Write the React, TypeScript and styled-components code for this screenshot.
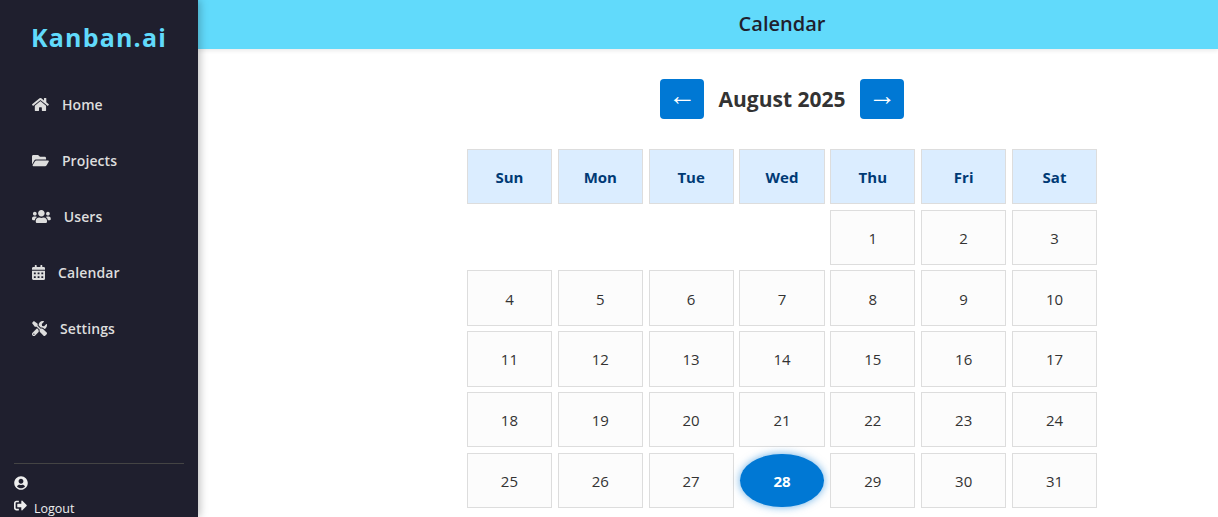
import React from 'react'
import styled, { createGlobalStyle } from 'styled-components'
import {
  FaHome,
  FaFolderOpen,
  FaUsers,
  FaCalendarAlt,
  FaTools,
  FaUserCircle,
  FaSignOutAlt,
} from 'react-icons/fa'

const GlobalStyle = createGlobalStyle`
  html, body {
    margin: 0;
    height: 100%;
    overflow: hidden;
    background: #fff;
    font-family: "Open Sans", "Noto Sans", "Liberation Sans", sans-serif;
  }
  * {
    box-sizing: border-box;
  }
`

const Layout = styled.div`
  display: flex;
  height: 517px;
  overflow: hidden;
`

const Sidebar = styled.aside`
  position: relative;
  z-index: 2;
  flex: 0 0 198px;
  display: flex;
  flex-direction: column;
  background: #1f1f2e;
  box-shadow: 2px 0 8px rgba(0, 0, 0, 0.25);
  padding: 0 14px;
`

const Logo = styled.h1`
  margin: 19px 0 0;
  height: 36px;
  line-height: 36px;
  text-align: center;
  font-size: 25px;
  font-weight: 700;
  letter-spacing: 1.2px;
  color: #61dafb;
`

const Nav = styled.nav`
  display: flex;
  flex-direction: column;
  gap: 26px;
  margin-top: 34px;
  padding-left: 18px;
`

const NavItem = styled.a<{ $iconWidth: number }>`
  display: flex;
  align-items: center;
  gap: 13px;
  height: 30px;
  font-size: 14px;
  font-weight: 600;
  letter-spacing: 0.1px;
  color: #dddddd;

  svg {
    flex: none;
    width: ${(p) => p.$iconWidth}px;
    height: 15px;
  }
`

const SidebarFooter = styled.div`
  margin-top: auto;
  border-top: 1px solid #444;
  padding-top: 12px;
  color: #eee;
  height: 54px;
`

const Avatar = styled.div`
  display: flex;
  height: 15px;
  font-size: 14px;
`

const Logout = styled.div`
  display: flex;
  align-items: center;
  gap: 7px;
  height: 20px;
  margin-top: 7px;
  font-size: 12.5px;
  color: #eee;

  svg {
    font-size: 13px;
    margin-top: -5px;
  }
`

const Main = styled.div`
  flex: 1;
  display: flex;
  flex-direction: column;
  min-width: 0;
`

const Header = styled.header`
  display: flex;
  align-items: center;
  justify-content: center;
  height: 49px;
  padding: 0 0 3px 148px;
  background: #61dafb;
  box-shadow: 0 2px 4px rgba(0, 0, 0, 0.08);
  font-size: 20px;
  font-weight: 600;
  color: #1f1f2e;
`

const Content = styled.main`
  display: flex;
  flex-direction: column;
  align-items: center;
  padding: 30px 0 0 148.04px;
`

const MonthBar = styled.div`
  display: flex;
  align-items: center;
  gap: 14.5px;
  height: 40px;
  margin-bottom: 29.7px;
`

const MonthTitle = styled.h2`
  margin: 0;
  font-size: 21px;
  font-weight: 700;
  color: #333;
`

const ArrowButton = styled.button`
  width: 44px;
  height: 40px;
  padding: 0 0 6px;
  border: none;
  border-radius: 4px;
  background: #0078d4;
  color: #fff;
  font-family: "Liberation Sans", sans-serif;
  font-size: 28px;
  line-height: 34px;
`

const Grid = styled.div`
  display: grid;
  grid-template-columns: repeat(7, 85.1px);
  grid-auto-rows: 55.3px;
  gap: 5.56px 5.757px;
  width: 630.24px;
`

const DayName = styled.div`
  display: flex;
  align-items: center;
  justify-content: center;
  padding-top: 1px;
  border: 1px solid #ddd;
  background: #dbedff;
  font-size: 15px;
  font-weight: 700;
  color: #003a75;
`

const DayCell = styled.div`
  display: flex;
  align-items: center;
  justify-content: center;
  padding-top: 1px;
  font-size: 15px;
  border: 1px solid #ddd;
  background: #fcfcfc;
  color: #333;
`

const TodayCell = styled(DayCell)`
  margin: 1px;
  border: none;
  border-radius: 50%;
  background: #0078d4;
  color: #fff;
  font-weight: 700;
  box-shadow: 0 0 8px rgba(0, 120, 212, 0.6);
`

const navItems = [
  { label: 'Home', icon: <FaHome />, iconWidth: 16.9 },
  { label: 'Projects', icon: <FaFolderOpen />, iconWidth: 16.9 },
  { label: 'Users', icon: <FaUsers />, iconWidth: 18.75 },
  { label: 'Calendar', icon: <FaCalendarAlt />, iconWidth: 13.1 },
  { label: 'Settings', icon: <FaTools />, iconWidth: 15 },
]

const dayNames = ['Sun', 'Mon', 'Tue', 'Wed', 'Thu', 'Fri', 'Sat']
const days = Array.from({ length: 31 }, (_, i) => i + 1)

const App: React.FC = () => {
  return (
    <Layout>
      <GlobalStyle />
      <Sidebar>
        <Logo>Kanban.ai</Logo>
        <Nav>
          {navItems.map((item) => (
            <NavItem key={item.label} $iconWidth={item.iconWidth}>
              {item.icon}
              <span>{item.label}</span>
            </NavItem>
          ))}
        </Nav>
        <SidebarFooter>
          <Avatar>
            <FaUserCircle />
          </Avatar>
          <Logout>
            <FaSignOutAlt />
            <span>Logout</span>
          </Logout>
        </SidebarFooter>
      </Sidebar>
      <Main>
        <Header>Calendar</Header>
        <Content>
          <MonthBar>
            <ArrowButton type='button'>←</ArrowButton>
            <MonthTitle>August 2025</MonthTitle>
            <ArrowButton type='button'>→</ArrowButton>
          </MonthBar>
          <Grid>
            {dayNames.map((name) => (
              <DayName key={name}>{name}</DayName>
            ))}
            {/* four empty cells before the 1st, as in the shot */}
            {[0, 1, 2, 3].map((i) => (
              <div key={`blank-${i}`} />
            ))}
            {days.map((day) =>
              day === 28 ? (
                <TodayCell key={day}>{day}</TodayCell>
              ) : (
                <DayCell key={day}>{day}</DayCell>
              )
            )}
          </Grid>
        </Content>
      </Main>
    </Layout>
  )
}

export default App
